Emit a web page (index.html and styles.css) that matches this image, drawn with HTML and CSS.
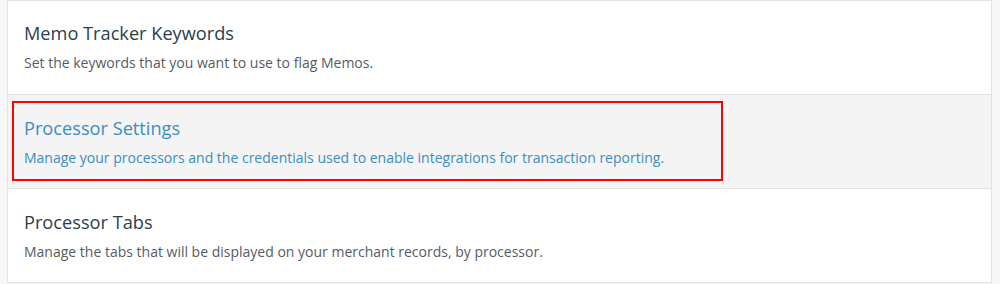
FILE: index.html
```html
<!DOCTYPE html>
<html>
<head>
<meta charset="utf-8">
<link rel="stylesheet" href="styles.css">
</head>
<body>
<div class="page">
  <div class="card">
    <div class="row">
      <div class="title">Memo Tracker Keywords</div>
      <div class="desc">Set the keywords that you want to use to flag Memos.</div>
    </div>
    <div class="row active">
      <div class="title">Processor Settings</div>
      <div class="desc">Manage your processors and the credentials used to enable integrations for transaction reporting.</div>
      <div class="highlight"></div>
    </div>
    <div class="row">
      <div class="title">Processor Tabs</div>
      <div class="desc">Manage the tabs that will be displayed on your merchant records, by processor.</div>
    </div>
  </div>
</div>
</body>
</html>
```
FILE: styles.css
```css
html, body {
  margin: 0;
  padding: 0;
  background: #f7f7f7;
  font-family: "Open Sans", "Noto Sans", sans-serif;
}
.page {
  padding: 0 8px 0 7px;
  height: 284px;
  box-sizing: border-box;
}
.card {
  width: 985px;
  background: #fff;
  border: 1px solid #e3e3e3;
  box-sizing: border-box;
}
.row {
  position: relative;
  height: 94px;
  box-sizing: border-box;
  padding: 20px 16px 0 16px;
  border-top: 1px solid #e3e3e3;
}
.row:first-child {
  border-top: none;
  height: 93px;
  padding-top: 19px;
}
.row.active {
  background: #f4f4f4;
}
.title {
  font-size: 18.2px;
  line-height: 26px;
  color: #2c3e50;
}
.desc {
  margin-top: 8px;
  font-size: 14px;
  line-height: 18px;
  color: #555c66;
}
.active .title,
.active .desc {
  color: #3b8ec2;
}
.highlight {
  position: absolute;
  left: 4px;
  top: 6px;
  width: 711px;
  height: 80px;
  border: 2px solid #ff0000;
  box-sizing: border-box;
}
```
